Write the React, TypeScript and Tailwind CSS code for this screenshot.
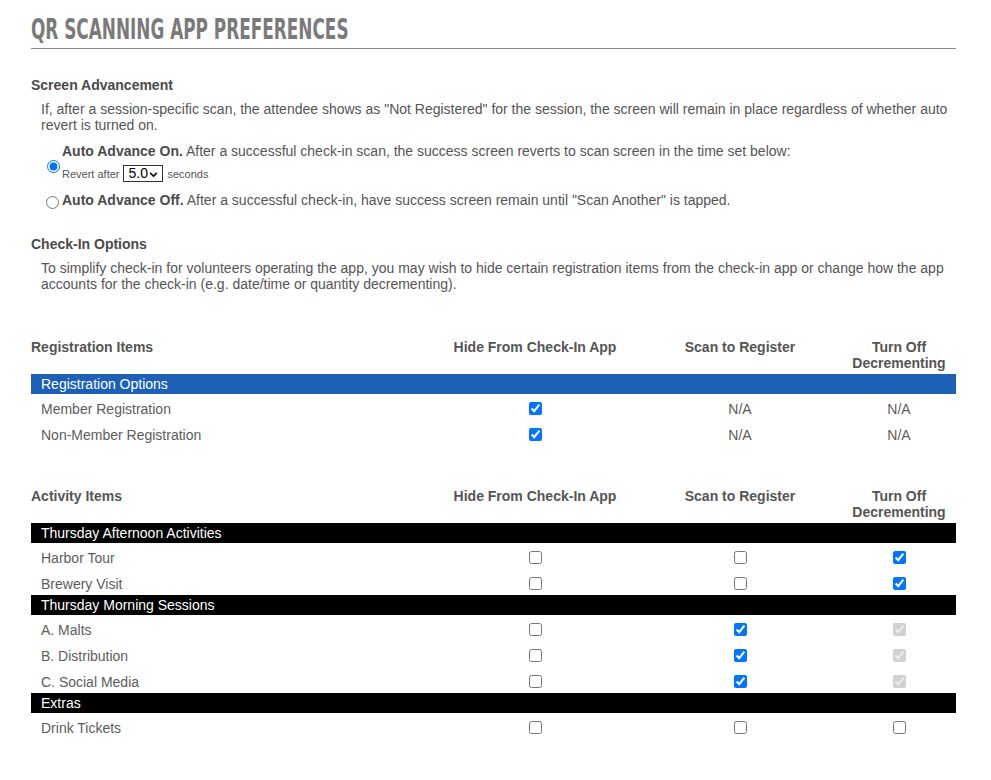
import { useState } from "react";

type Cell = "on" | "off" | "na" | "lock";

type Row = { label: string; cells: [Cell, Cell, Cell] };

type Group = { title: string; tone: "blue" | "black"; rows: Row[] };

const registration: Group[] = [
  {
    title: "Registration Options",
    tone: "blue",
    rows: [
      { label: "Member Registration", cells: ["on", "na", "na"] },
      { label: "Non-Member Registration", cells: ["on", "na", "na"] },
    ],
  },
];

const activities: Group[] = [
  {
    title: "Thursday Afternoon Activities",
    tone: "black",
    rows: [
      { label: "Harbor Tour", cells: ["off", "off", "on"] },
      { label: "Brewery Visit", cells: ["off", "off", "on"] },
    ],
  },
  {
    title: "Thursday Morning Sessions",
    tone: "black",
    rows: [
      { label: "A. Malts", cells: ["off", "on", "lock"] },
      { label: "B. Distribution", cells: ["off", "on", "lock"] },
      { label: "C. Social Media", cells: ["off", "on", "lock"] },
    ],
  },
  {
    title: "Extras",
    tone: "black",
    rows: [{ label: "Drink Tickets", cells: ["off", "off", "off"] }],
  },
];

const cols = "grid grid-cols-[401px_206px_204px_114px]";

function CellView({ cell }: { cell: Cell }) {
  if (cell === "na") return <span>N/A</span>;
  return (
    <input
      type="checkbox"
      defaultChecked={cell === "on" || cell === "lock"}
      disabled={cell === "lock"}
      className="m-0 h-[13px] w-[13px]"
    />
  );
}

function ItemsTable({ heading, groups }: { heading: string; groups: Group[] }) {
  return (
    <div className="w-[925px]">
      <div className={`${cols} pb-[3px] font-bold text-[#555]`}>
        <div>{heading}</div>
        <div className="text-center">Hide From Check-In App</div>
        <div className="text-center">Scan to Register</div>
        <div className="text-center">Turn Off Decrementing</div>
      </div>
      {groups.map((g) => (
        <div key={g.title}>
          <div
            className={`flex h-[20px] items-center pl-[10px] text-white ${
              g.tone === "blue" ? "bg-[#1c61b7]" : "bg-black"
            }`}
          >
            {g.title}
          </div>
          {g.rows.map((r) => (
            <div key={r.label} className={`${cols} h-[26px] pt-[3px] text-[#5c5c5c]`}>
              <div className="flex items-center pl-[10px]">{r.label}</div>
              {r.cells.map((c, i) => (
                <div key={i} className="flex items-center justify-center">
                  <CellView cell={c} />
                </div>
              ))}
            </div>
          ))}
        </div>
      ))}
    </div>
  );
}

export default function App() {
  const [advance, setAdvance] = useState("on");

  return (
    <div className="min-h-screen bg-white pb-10 pl-[31px] pr-[35px] pt-[12px] font-['Liberation_Sans',Arial,sans-serif] text-[14px] leading-[16px] text-[#555]">
      <div className="overflow-hidden border-b border-[#8a8a8a]">
        <h1 className="inline-block origin-left scale-x-[0.67] whitespace-nowrap font-['DejaVu_Sans_Condensed','DejaVu_Sans',sans-serif] text-[28px] font-bold leading-[36px] text-[#7a7a7a]">
          QR SCANNING APP PREFERENCES
        </h1>
      </div>

      <h2 className="mt-[28px] font-bold text-[#4a4a4a]">Screen Advancement</h2>
      <p className="mt-2 pl-[10px]">
        If, after a session-specific scan, the attendee shows as "Not Registered" for the session, the screen will
        remain in place regardless of whether auto revert is turned on.
      </p>

      <label className="mt-[10px] ml-[16px] flex items-end">
        <input
          type="radio"
          name="advance"
          checked={advance === "on"}
          onChange={() => setAdvance("on")}
          className="m-0 mb-[9px] h-[13px] w-[13px] shrink-0"
        />
        <div className="ml-[2px]">
          <div>
            <b className="text-[#4a4a4a]">Auto Advance On.</b> After a successful check-in scan, the success screen
            reverts to scan screen in the time set below:
          </div>
          <div className="mt-[6px] flex items-center text-[11px] leading-[13px]">
            <span className="mt-[2px]">Revert after</span>
            <span className="relative ml-[4px] inline-flex h-[17px] w-[40px] items-center border border-[#333] bg-white">
              <select
                defaultValue="5.0"
                className="h-full w-full appearance-none bg-transparent pl-[4px] text-[14px] text-black outline-none"
              >
                <option>3.0</option>
                <option>5.0</option>
                <option>10.0</option>
              </select>
              <svg
                viewBox="0 0 10 6"
                className="pointer-events-none absolute right-[4px] top-[6px] h-[5px] w-[9px]"
                fill="none"
                stroke="#111"
                strokeWidth="2"
              >
                <path d="M1 1l4 4 4-4" />
              </svg>
            </span>
            <span className="ml-[4px] mt-[2px]">seconds</span>
          </div>
        </div>
      </label>

      <label className="mt-[10px] ml-[15px] flex items-start">
        <input
          type="radio"
          name="advance"
          checked={advance === "off"}
          onChange={() => setAdvance("off")}
          className="m-0 mt-[4px] h-[13px] w-[13px] shrink-0"
        />
        <div className="ml-[3px]">
          <b className="text-[#4a4a4a]">Auto Advance Off.</b> After a successful check-in, have success screen remain
          until "Scan Another" is tapped.
        </div>
      </label>

      <h2 className="mt-[27px] font-bold text-[#4a4a4a]">Check-In Options</h2>
      <p className="mt-2 pl-[10px]">
        To simplify check-in for volunteers operating the app, you may wish to hide certain registration items from the
        check-in app or change how the app accounts for the check-in (e.g. date/time or quantity decrementing).
      </p>

      <div className="mt-[47px]">
        <ItemsTable heading="Registration Items" groups={registration} />
      </div>
      <div className="mt-[42px]">
        <ItemsTable heading="Activity Items" groups={activities} />
      </div>
    </div>
  );
}
